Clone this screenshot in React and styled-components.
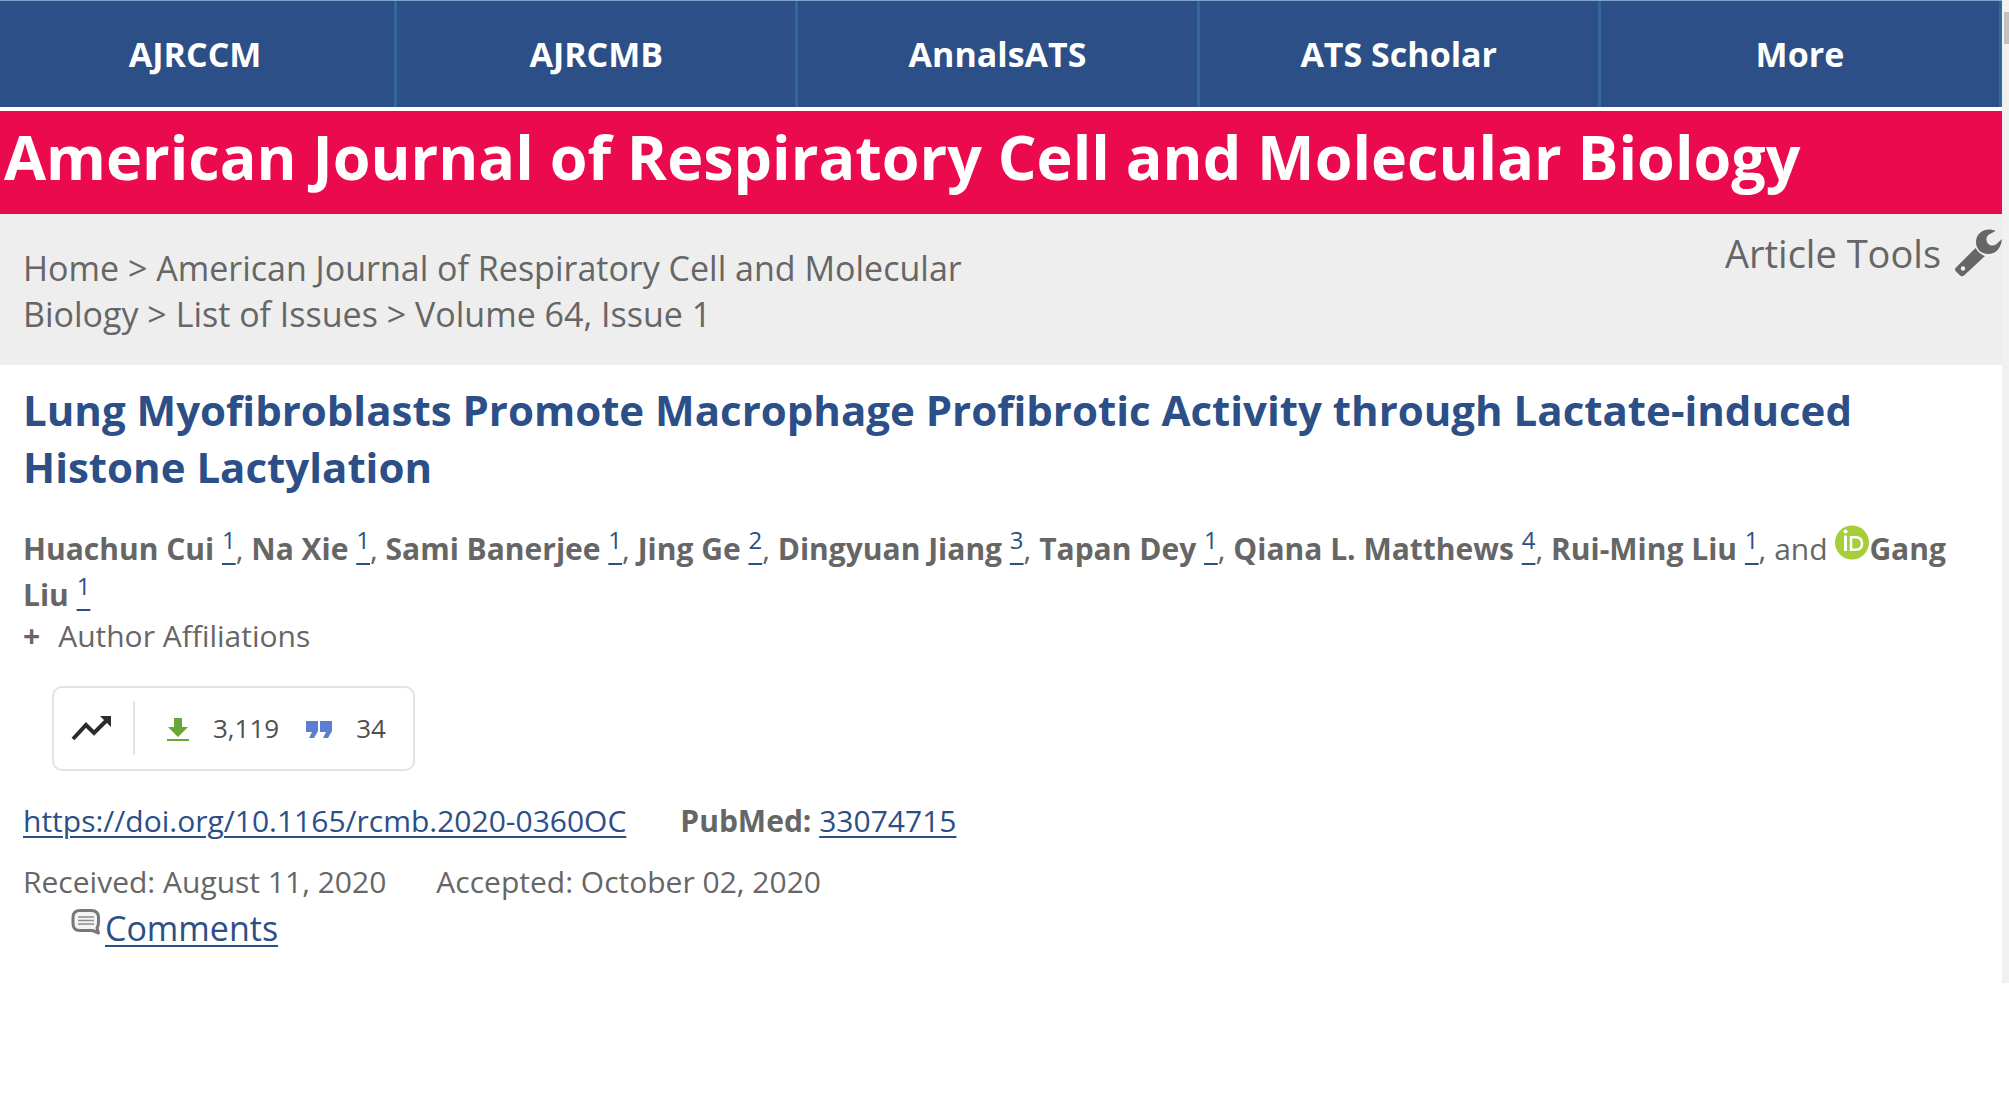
import React from "react";
import styled, { createGlobalStyle } from "styled-components";

const GlobalStyle = createGlobalStyle`
  *, *::before, *::after { box-sizing: border-box; }
  body {
    margin: 0;
    background: #ffffff;
    color: #666666;
    font-family: "Open Sans", "Noto Sans", sans-serif;
    font-size: 30px;
    line-height: 46px;
  }
`;

const Window = styled.div`
  display: flex;
  overflow: hidden;
`;

const Page = styled.div`
  flex: 1;
  min-width: 0;
  padding-bottom: 32px;
`;

const ScrollTrack = styled.div`
  flex: none;
  width: 7px;
  padding: 12px 0 0 2px;
  background: #f1f1f1;
`;

const ScrollThumb = styled.div`
  height: 32px;
  background: #c1c1c1;
`;

const JournalNav = styled.nav`
  display: flex;
  margin-left: -4px;
  border-top: 1px solid #7fa3cb;
`;

const JournalLink = styled.a`
  flex: 1;
  border-right: 3px solid #336699;
  background: #2b4f86;
  color: #ffffff;
  font-size: 34px;
  font-weight: 700;
  line-height: 106px;
  text-align: center;
  text-decoration: none;
`;

const Banner = styled.header`
  margin-top: 4px;
  padding: 0 4px 12px;
  background: #ec0a4f;
  color: #ffffff;
  font-size: 61px;
  font-weight: 700;
  line-height: 91px;
  white-space: nowrap;
`;

const SubHeader = styled.div`
  display: flex;
  justify-content: space-between;
  align-items: flex-start;
  background: #eeeeee;
`;

const Breadcrumbs = styled.nav`
  width: 50%;
  padding: 31px 0 28px 23px;
  font-size: 34px;
`;

const Crumb = styled.a`
  color: inherit;
  text-decoration: none;
`;

const ToolsButton = styled.button`
  display: flex;
  align-items: center;
  gap: 14px;
  margin-top: 15px;
  padding: 0;
  border: 0;
  background: none;
  color: #666666;
  font: inherit;
  font-size: 38px;
  line-height: 48px;
`;

const Article = styled.main`
  padding: 16px 23px 0;
`;

const Title = styled.h1`
  margin: 0;
  color: #2b4f86;
  font-size: 42px;
  font-weight: 700;
  line-height: 57px;
`;

const Authors = styled.p`
  margin: 30px 0 0;
`;

const Name = styled.strong`
  font-weight: 700;
`;

const Ref = styled.sup`
  font-size: 24px;
  line-height: 0;
`;

const TextLink = styled.a`
  color: #2b4f86;
  text-decoration: underline;
  text-decoration-thickness: 2px;
  text-underline-offset: ${(p) => (p.$deep ? "14px" : "4px")};
`;

const OrcidLink = styled.a`
  svg { vertical-align: baseline; }
`;

const AffiliationToggle = styled.button`
  display: flex;
  gap: 18px;
  padding: 0;
  border: 0;
  background: none;
  color: inherit;
  font: inherit;
  line-height: 36px;
`;

const Metrics = styled.section`
  display: flex;
  align-items: center;
  width: fit-content;
  height: 85px;
  margin: 32px 0 27px 29px;
  padding: 0 27px 2px 17px;
  border: 2px solid #e3e3e3;
  border-radius: 10px;
  color: #505050;
  font-size: 26px;
`;

const MetricsIcon = styled.span`
  display: flex;
  align-items: center;
  height: 54px;
  padding-right: 20px;
  border-right: 2px solid #e3e3e3;
`;

const Metric = styled.span`
  display: flex;
  align-items: center;
  gap: 24px;
  margin-left: ${(p) => (p.$first ? "32px" : "27px")};
  svg { margin-top: 4px; }
`;

const MetaRow = styled.div`
  display: flex;
  gap: ${(p) => (p.$wide ? "54px" : "50px")};
  margin-bottom: ${(p) => (p.$wide ? "15px" : "0")};
`;

const CommentRow = styled.div`
  display: flex;
  align-items: flex-start;
  gap: 4px;
  padding-left: 48px;
  font-size: 34px;
  svg { margin-top: 3px; }
`;

const journals = ["AJRCCM", "AJRCMB", "AnnalsATS", "ATS Scholar", "More"];

const crumbs = [
  "Home",
  "American Journal of Respiratory Cell and Molecular Biology",
  "List of Issues",
  "Volume 64, Issue 1",
];

const authors = [
  ["Huachun Cui", 1],
  ["Na Xie", 1],
  ["Sami Banerjee", 1],
  ["Jing Ge", 2],
  ["Dingyuan Jiang", 3],
  ["Tapan Dey", 1],
  ["Qiana L. Matthews", 4],
  ["Rui-Ming Liu", 1],
  ["Gang Liu", 1],
];

const WrenchIcon = () => (
  <svg width="47" height="48" viewBox="0 0 47 48" aria-hidden="true">
    <path
      d="M40.500 2C33-2 21 2 21 13c0 7 5 12 12 12 8 0 13-6 14-15l-6 5.500c-3 2-7 1-8.500-1.500-2-3-1-7 1.500-8.500z"
      fill="#666666"
    />
    <path
      d="M20.500 19 1 38.500q-2 2 0 4l4 4q2 1.500 4 0L30 27q-6-2-9.500-8z"
      fill="#666666"
    />
    <circle cx="8" cy="39.500" r="2.200" fill="#eeeeee" />
  </svg>
);

const OrcidIcon = () => (
  <svg width="34" height="35" viewBox="0 0 34 35" role="img" aria-label="ORCID">
    <circle cx="17" cy="17.500" r="17" fill="#a6ce39" />
    <circle cx="10.500" cy="6.500" r="2" fill="#ffffff" />
    <path d="M10.500 10.500v15.500" stroke="#ffffff" strokeWidth="3" />
    <path
      d="M16 12.200h4.500c4 0 6.500 2.300 6.500 6.300s-2.500 6.300-6.500 6.300H16z"
      fill="none"
      stroke="#ffffff"
      strokeWidth="2.500"
    />
  </svg>
);

const TrendIcon = () => (
  <svg width="42" height="26" viewBox="0 0 42 26" aria-hidden="true">
    <path d="M2 24 15 10l8 8L36 5" fill="none" stroke="#2b2b2b" strokeWidth="4" />
    <path d="M29 1h11v11z" fill="#2b2b2b" />
  </svg>
);

const DownloadIcon = () => (
  <svg width="22" height="24" viewBox="0 0 22 24" aria-hidden="true">
    <path d="M7 0h8v9h6L11 19 1 9h6zM0 21h22v2H0z" fill="#68a636" />
  </svg>
);

const QuoteIcon = () => (
  <svg width="26" height="18" viewBox="0 0 26 18" aria-hidden="true">
    <path
      d="M0 0h12v10l-4 7H3l3-6H0zM14 0h12v10l-4 7h-5l3-6h-6z"
      fill="#5c7dd2"
    />
  </svg>
);

const CommentIcon = () => (
  <svg width="30" height="28" viewBox="0 0 30 28" aria-hidden="true">
    <path
      d="M9 2.500h11c5.500 0 7.500 2.500 7.500 7v5c0 2.500-.5 4-1.500 5.500l1.500 5-6-2.500H9c-5 0-7-2.500-7-7v-6c0-4.500 2-7 7-7z"
      fill="#f4f4f4"
      stroke="#777777"
      strokeWidth="3"
      strokeLinejoin="round"
    />
    <path d="M7 9h16M7 12.500h16M7 16h16" stroke="#8c8c8c" strokeWidth="1.500" />
  </svg>
);

export default function App() {
  const last = authors.length - 1;
  return (
    <>
      <GlobalStyle />
      <Window>
        <Page>
          <JournalNav aria-label="Journals">
            {journals.map((name) => (
              <JournalLink key={name} href="#">
                {name}
              </JournalLink>
            ))}
          </JournalNav>
          <Banner>American Journal of Respiratory Cell and Molecular Biology</Banner>
          <SubHeader>
            <Breadcrumbs aria-label="Breadcrumb">
              {crumbs.map((label, i) => (
                <React.Fragment key={label}>
                  {i > 0 && " > "}
                  <Crumb href="#">{label}</Crumb>
                </React.Fragment>
              ))}
            </Breadcrumbs>
            <ToolsButton type="button">
              Article Tools
              <WrenchIcon />
            </ToolsButton>
          </SubHeader>
          <Article>
            <Title>
              Lung Myofibroblasts Promote Macrophage Profibrotic Activity through
              Lactate-induced Histone Lactylation
            </Title>
            <Authors>
              {authors.map(([name, ref], i) => (
                <React.Fragment key={name}>
                  {i > 0 && ", "}
                  {i === last && (
                    <>
                      {"and "}
                      <OrcidLink href="#">
                        <OrcidIcon />
                      </OrcidLink>
                    </>
                  )}
                  <Name>{name}</Name>{" "}
                  <Ref>
                    <TextLink href="#" $deep>
                      {ref}
                    </TextLink>
                  </Ref>
                </React.Fragment>
              ))}
            </Authors>
            <AffiliationToggle type="button">
              <Name>+</Name>
              Author Affiliations
            </AffiliationToggle>
            <Metrics>
              <MetricsIcon>
                <TrendIcon />
              </MetricsIcon>
              <Metric $first>
                <DownloadIcon />
                3,119
              </Metric>
              <Metric>
                <QuoteIcon />
                34
              </Metric>
            </Metrics>
            <MetaRow $wide>
              <TextLink href="#">https://doi.org/10.1165/rcmb.2020-0360OC</TextLink>
              <span>
                <Name>PubMed:</Name> <TextLink href="#">33074715</TextLink>
              </span>
            </MetaRow>
            <MetaRow>
              <span>Received: August 11, 2020</span>
              <span>Accepted: October 02, 2020</span>
            </MetaRow>
            <CommentRow>
              <CommentIcon />
              <TextLink href="#">Comments</TextLink>
            </CommentRow>
          </Article>
        </Page>
        <ScrollTrack>
          <ScrollThumb />
        </ScrollTrack>
      </Window>
    </>
  );
}
